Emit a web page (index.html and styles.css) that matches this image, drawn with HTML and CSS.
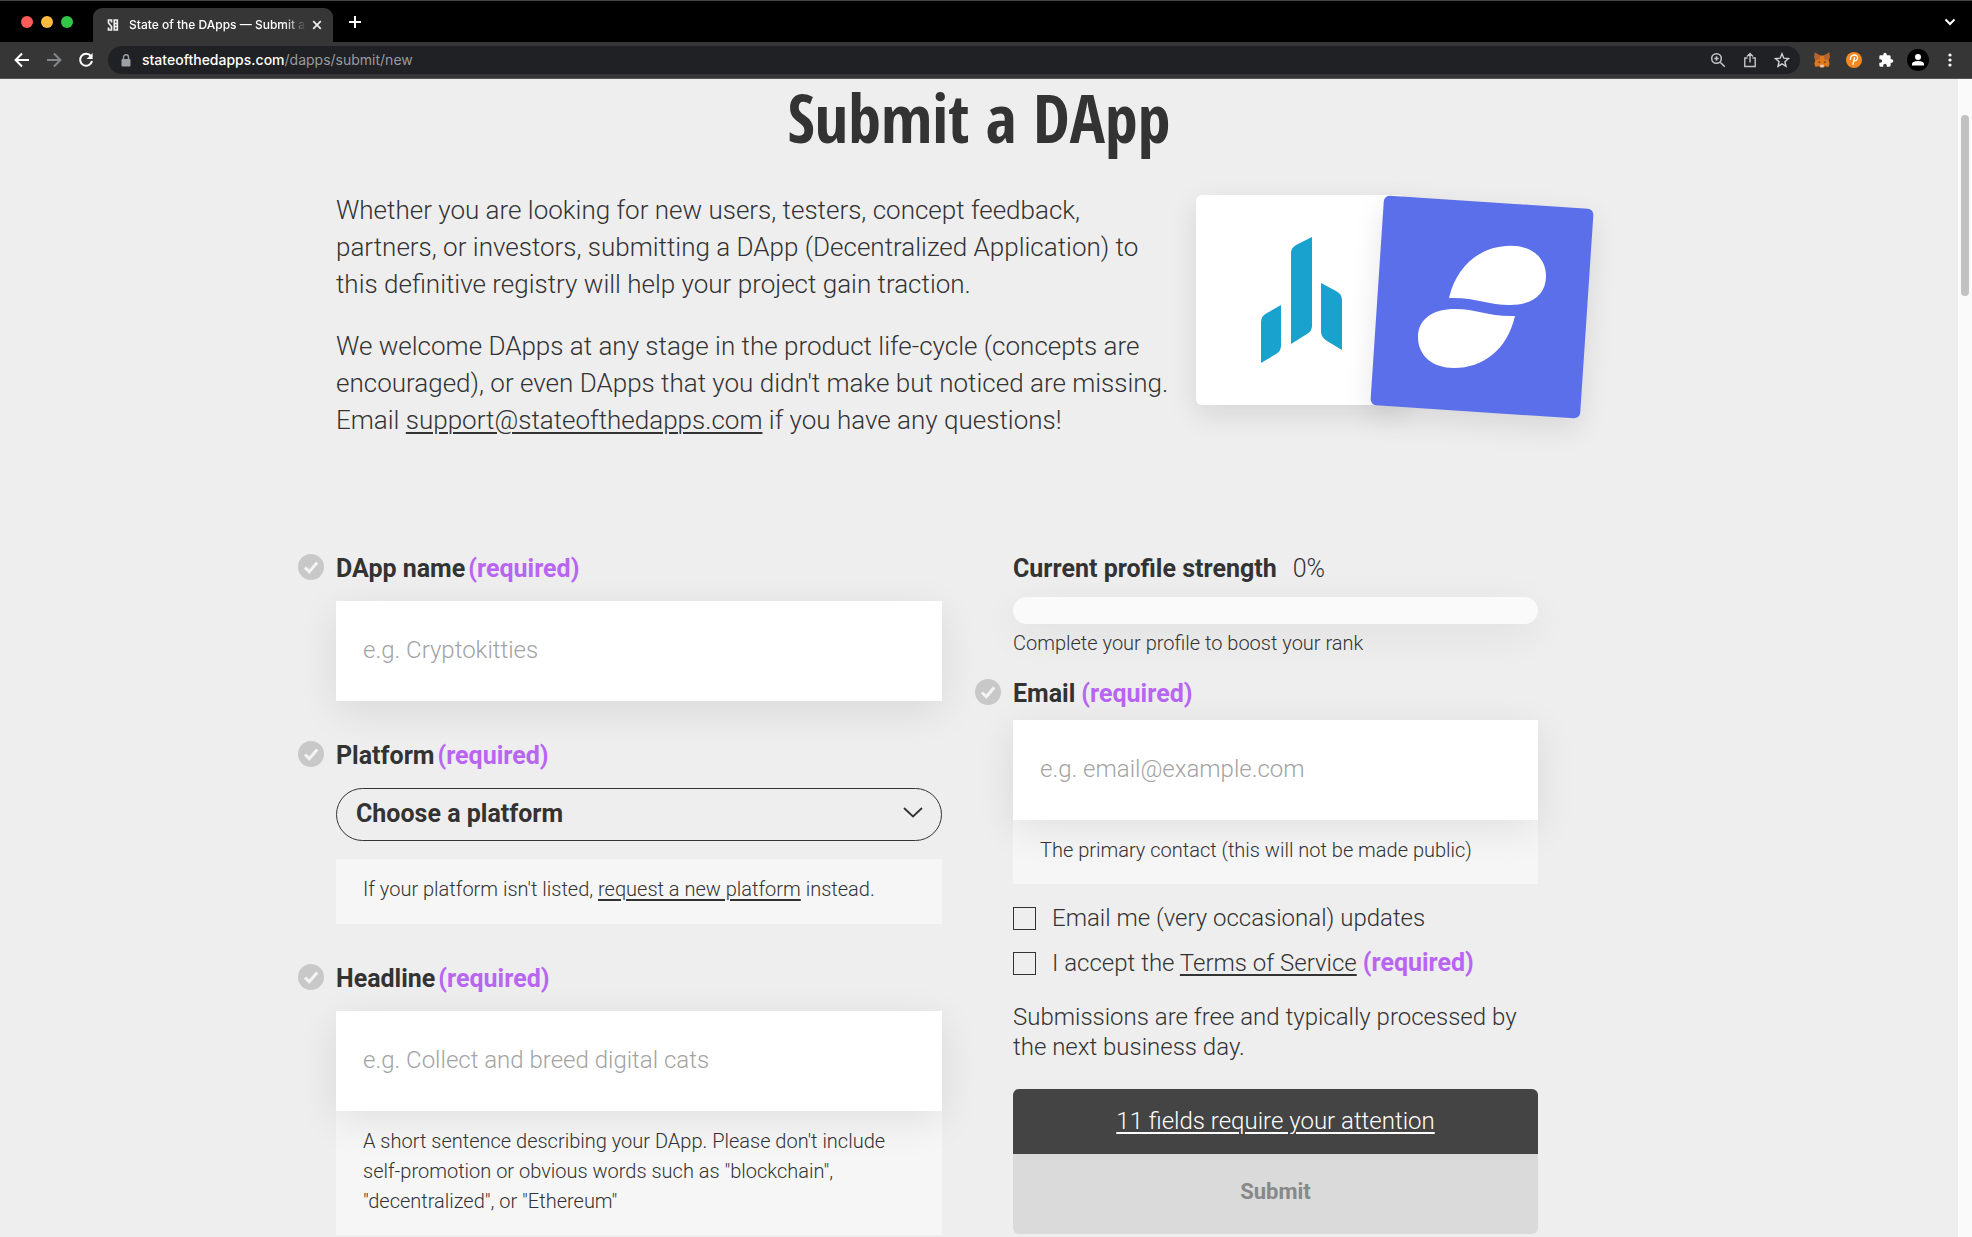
FILE: index.html
```html
<!DOCTYPE html>
<html lang="en">
<head>
<meta charset="utf-8">
<title>State of the DApps — Submit a DApp</title>
<link rel="stylesheet" href="styles.css">
</head>
<body>
<svg class="sprite" aria-hidden="true">
  <symbol id="check" viewBox="0 0 26 26">
    <circle cx="13" cy="13" r="13" fill="#c8c8c8"/>
    <path d="M7 13.5l4.2 4.2 8-9.2" fill="none" stroke="#f4f4f4" stroke-width="3"/>
  </symbol>
</svg>

<header class="browser">
  <div class="tabbar">
    <div class="lights"><i class="light red"></i><i class="light amber"></i><i class="light green"></i></div>
    <div class="tab">
      <svg class="favicon" width="12" height="14" viewBox="0 0 12 14" fill="none" stroke="#eee" stroke-width="1.7"><path d="M4.500 4.500V2H1.500v3l3 3.500V12h-3V9.500M7.300 2v10h3V2zM7.300 5.500h3M7.300 8.500h3"/></svg>
      <span class="tab-title">State of the DApps — Submit a</span>
      <button class="plain" aria-label="Close tab"><svg width="10" height="10" viewBox="0 0 10 10" stroke="#eee" stroke-width="1.7"><path d="M1.2 1.2l7.6 7.6M8.8 1.2L1.2 8.8"/></svg></button>
    </div>
    <button class="plain new-tab" aria-label="New tab"><svg width="14" height="14" viewBox="0 0 14 14" stroke="#fff" stroke-width="2"><path d="M7 1v12M1 7h12"/></svg></button>
    <button class="plain tab-search" aria-label="Search tabs"><svg width="12" height="8" viewBox="0 0 12 8" fill="none" stroke="#fff" stroke-width="2"><path d="M1.5 1.5L6 6l4.500-4.500"/></svg></button>
  </div>
  <div class="toolbar">
    <nav class="nav-buttons">
      <button class="plain" aria-label="Back"><svg width="16" height="16" viewBox="0 0 16 16" fill="none" stroke="#fff" stroke-width="2"><path d="M15 8H2.500M8 1.500L1.600 8 8 14.500"/></svg></button>
      <button class="plain" aria-label="Forward"><svg width="16" height="16" viewBox="0 0 16 16" fill="none" stroke="#858688" stroke-width="2"><path d="M1 8h12.500M8 1.500L14.400 8 8 14.500"/></svg></button>
      <button class="plain" aria-label="Reload"><svg width="16" height="16" viewBox="0 0 16 16" fill="none" stroke="#fff" stroke-width="2"><path d="M13 4.200A6 6 0 1 0 14 9"/><path d="M14.600 1v6H8.600z" fill="#fff" stroke="none"/></svg></button>
    </nav>
    <div class="address">
      <svg width="10" height="13" viewBox="0 0 10 13"><rect x="0.500" y="5" width="9" height="7.500" rx="1" fill="#9aa0a6"/><path d="M2.500 5V3.300a2.500 2.500 0 0 1 5 0V5" fill="none" stroke="#9aa0a6" stroke-width="1.400"/></svg>
      <span class="url"><b>stateofthedapps.com</b>/dapps/submit/new</span>
      <svg width="16" height="16" viewBox="0 0 16 16" fill="none" stroke="#c4c6c9" stroke-width="1.500"><circle cx="6.500" cy="6.500" r="4.800"/><path d="M10.200 10.200l4.600 4.600M4.300 6.500h4.400M6.500 4.300v4.400"/></svg>
      <svg width="16" height="16" viewBox="0 0 16 16" fill="none" stroke="#c4c6c9" stroke-width="1.400"><path d="M5.500 6H2.800v8.500h10.400V6h-2.700M8 10.500V1.800M5 4.500l3-3 3 3"/></svg>
      <svg width="16" height="16" viewBox="0 0 16 16" fill="none" stroke="#d0d2d4" stroke-width="1.400"><path d="M8 1.800l1.800 4.400 4.700.4-3.600 3.100 1.100 4.600L8 11.800l-4 2.500 1.100-4.600L1.500 6.600l4.700-.4z"/></svg>
    </div>
    <div class="extensions">
      <svg width="16" height="16" viewBox="0 0 16 16"><path d="M.8.5L6 3.600h4L15.200.5l.4 5-.9 3.200 1 3-1.200 3.300-3.300-.8L9.500 15.500h-3l-1.700-1.300-3.300.8L.3 11.700l1-3L.4 5.500z" fill="#e2761b"/><path d="M.8.5l5.400 3.800-.7 3-4.200 1L.4 5.500zM15.200.5L9.800 4.300l.7 3 4.200 1 .9-2.800z" fill="#b5622c"/><path d="M6 12.700h4l-.5 2.500h-3z" fill="#d9d2cc"/><path d="M3.600 9.500l2.600.3-.6 1.300zM12.400 9.500l-2.600.3.6 1.300z" fill="#233447"/></svg>
      <svg width="16" height="16" viewBox="0 0 16 16"><circle cx="8" cy="8" r="8" fill="#f7871f"/><path d="M4.400 7.800C4 4.500 6.500 2.800 8.800 3c2.300.2 3.300 2 2.600 3.900-.6 1.700-2.300 2.300-4 2M8.600 5.200L6.800 13" fill="none" stroke="#fff" stroke-width="1.300"/></svg>
      <svg width="16" height="16" viewBox="0 0 24 24"><path fill="#fff" d="M20.500 11H19V7a2 2 0 0 0-2-2h-4V3.500a2.500 2.500 0 0 0-5 0V5H4a2 2 0 0 0-2 2v3.800h1.500a2.700 2.700 0 0 1 0 5.400H2V20a2 2 0 0 0 2 2h3.800v-1.500a2.700 2.700 0 0 1 5.400 0V22H17a2 2 0 0 0 2-2v-4h1.500a2.500 2.500 0 0 0 0-5z"/></svg>
      <svg class="avatar" width="22" height="22" viewBox="0 0 22 22"><circle cx="11" cy="11" r="11" fill="#000"/><circle cx="11" cy="8" r="3" fill="#fff"/><path d="M5 16.500V15c0-2.200 4-3 6-3s6 .8 6 3v1.500z" fill="#fff"/></svg>
      <svg width="16" height="16" viewBox="0 0 16 16" fill="#fff"><circle cx="8" cy="3" r="1.600"/><circle cx="8" cy="8" r="1.600"/><circle cx="8" cy="13" r="1.600"/></svg>
    </div>
  </div>
</header>

<div class="viewport">
<main class="page">
  <h1>Submit a DApp</h1>

  <section class="intro">
    <div class="intro-text">
      <p>Whether you are looking for new users, testers, concept feedback,<br>partners, or investors, submitting a DApp (Decentralized Application) to<br>this definitive registry will help your project gain traction.</p>
      <p>We welcome DApps at any stage in the product life-cycle (concepts are<br>encouraged), or even DApps that you didn't make but noticed are missing.<br>Email <a href="mailto:support@stateofthedapps.com">support@stateofthedapps.com</a> if you have any questions!</p>
    </div>
    <div class="logos">
      <svg class="logo" viewBox="0 0 210 210" fill="#1aa2cf"><path d="M65 168V127Q65 121 71 118L85 110V151Q85 156 80 159zM95 149V58Q95 53 100 50L116 42V131Q116 136 111 139zM125 88L140 96Q146 99 146 105V155L131 146Q125 142 125 137z"/></svg>
      <svg class="logo tilted" viewBox="0 0 210 210" fill="#fff"><g transform="rotate(-3.800 105 105)"><path d="M72 96C80 62 105 43.700 134 43.700c21 0 35 12.300 35 30.300s-13 29-36 29-35-8-61-7z"/><path d="M138 114c-8 34-32 52-61 52-21 0-36-12-36-31 0-18 15-28 37-28s34 8 60 7z"/></g></svg>
    </div>
  </section>

  <form class="form">
    <div class="column main-column">
      <div class="field">
        <svg class="status"><use href="#check"/></svg>
        <label for="name">DApp name <span class="required">(required)</span></label>
        <input class="text-input" id="name" type="text" placeholder="e.g. Cryptokitties">
      </div>
      <div class="field">
        <svg class="status"><use href="#check"/></svg>
        <label for="platform">Platform <span class="required">(required)</span></label>
        <div class="select">
          <select id="platform"><option>Choose a platform</option></select>
          <svg width="20" height="11" viewBox="0 0 20 11" fill="none" stroke="#333" stroke-width="1.800"><path d="M1 1l9 8.500L19 1"/></svg>
        </div>
        <p class="hint detached">If your platform isn't listed, <a href="#">request a new platform</a> instead.</p>
      </div>
      <div class="field">
        <svg class="status"><use href="#check"/></svg>
        <label for="headline">Headline <span class="required">(required)</span></label>
        <input class="text-input" id="headline" type="text" placeholder="e.g. Collect and breed digital cats">
        <p class="hint">A short sentence describing your DApp. Please don't include<br>self-promotion or obvious words such as "blockchain",<br>"decentralized", or "Ethereum"</p>
      </div>
    </div>

    <div class="column side-column">
      <div class="strength">
        <div class="strength-title"><strong>Current profile strength</strong><span>0%</span></div>
        <div class="bar" role="progressbar" aria-label="Profile strength" aria-valuenow="0"></div>
        <p>Complete your profile to boost your rank</p>
      </div>
      <div class="field compact">
        <svg class="status"><use href="#check"/></svg>
        <label for="email">Email <span class="required">(required)</span></label>
        <input class="text-input" id="email" type="email" placeholder="e.g. email@example.com">
        <p class="hint">The primary contact (this will not be made public)</p>
      </div>
      <div class="checks">
        <div class="check"><input type="checkbox" id="updates"><label for="updates">Email me (very occasional) updates</label></div>
        <div class="check"><input type="checkbox" id="terms"><label for="terms">I accept the <a href="#">Terms of Service</a></label><span class="required">(required)</span></div>
      </div>
      <p class="note">Submissions are free and typically processed by<br>the next business day.</p>
      <div class="actions">
        <div class="attention"><a href="#name">11 fields require your attention</a></div>
        <button class="submit" type="submit" disabled>Submit</button>
      </div>
    </div>
  </form>
</main>
<div class="scrollbar"><div class="thumb"></div></div>
</div>
</body>
</html>
```
FILE: styles.css
```css
* { box-sizing: border-box; }

body {
  margin: 0;
  min-height: 100vh;
  display: flex;
  flex-direction: column;
  background: #eee;
  color: #333;
  font-family: Roboto, "Liberation Sans", sans-serif;
  font-weight: 300;
  font-size: 24px;
  line-height: 30px;
}

p { margin: 0; }
a { color: inherit; text-decoration-thickness: 2px; text-underline-offset: 3px; }
svg { display: block; flex: none; }
.sprite { display: none; }
.plain { display: flex; padding: 0; border: 0; background: none; }

/* Browser frame */
.browser { font-family: Inter, sans-serif; line-height: 20px; }
.tabbar {
  display: flex;
  align-items: center;
  height: 42px;
  padding-right: 16px;
  border-top: 1px solid #444;
  background: #000;
}
.lights { display: flex; gap: 8px; padding: 0 20px 0 21px; }
.light { width: 12px; height: 12px; border-radius: 50%; }
.red { background: #fc5b57; }
.amber { background: #fdbc40; }
.green { background: #33c748; }
.tab {
  display: flex;
  align-items: center;
  align-self: flex-end;
  width: 240px;
  height: 34px;
  padding: 0 11px 0 14px;
  border-radius: 9px 9px 0 0;
  background: #363636;
}
.tab-title {
  flex: 1;
  margin: 0 6px 0 10px;
  overflow: hidden;
  white-space: nowrap;
  font-size: 12px;
  font-weight: 500;
  color: #fff;
  mask-image: linear-gradient(90deg, #000 88%, transparent);
}
.new-tab { margin-left: 15px; }
.tab-search { margin-left: auto; }
.toolbar {
  display: flex;
  align-items: center;
  height: 37px;
  padding: 0 14px;
  background: #363636;
  border-bottom: 1px solid #555;
}
.nav-buttons { display: flex; gap: 16px; }
.address {
  flex: 1;
  display: flex;
  align-items: center;
  gap: 16px;
  height: 28px;
  margin: 0 14px;
  padding: 0 10px 0 13px;
  border-radius: 14px;
  background: #202124;
}
.url { flex: 1; margin-left: -5px; font-size: 14px; font-weight: 400; color: #9a9b9e; }
.url b { font-weight: 500; color: #fff; }
.extensions { display: flex; align-items: center; gap: 16px; }
.avatar { margin: 0 -3px; }

/* Page area and its scrollbar */
.viewport { flex: 1; display: flex; }
.page { flex: 1; padding: 0 24px; }
.scrollbar { width: 14px; padding: 36px 3px 0; background: #fafafa; }
.thumb { height: 181px; border-radius: 4px; background: #c1c1c1; }

h1 {
  margin: 0 0 4px;
  text-align: center;
  font-family: "Open Sans Condensed", "Noto Sans Condensed", "Roboto Condensed", Roboto, sans-serif;
  font-size: 66px;
  font-weight: 500;
  line-height: 76px;
}

.intro, .form { max-width: 1286px; margin: 0 auto; }
.intro {
  display: flex;
  gap: 20px;
  padding-top: 33px;
}
.intro-text { width: 840px; font-size: 26px; line-height: 37px; }
.intro-text p + p { margin-top: 25px; }
.logos { display: flex; align-items: flex-start; padding-top: 3px; }
.logo {
  width: 210px;
  height: 210px;
  border-radius: 6px;
  background: #fff;
  box-shadow: 0 10px 30px rgba(0, 0, 0, .1);
}
.tilted { margin: 7px 0 0 -29px; background: #5c6fea; transform: rotate(3.8deg); }

/* Form */
.form {
  display: flex;
  gap: 71px;
  padding-top: 114px;
  padding-right: 84px;
  padding-bottom: 3px;
}
.main-column { flex: 606; }
.side-column { flex: 525; }
.field { position: relative; display: flex; flex-direction: column; }
.field + .field { margin-top: 39px; }
.field label {
  display: flex;
  gap: 3px;
  margin-bottom: 16px;
  font-size: 25px;
  font-weight: 700;
  line-height: 32px;
}
.status { position: absolute; left: -38px; top: 1px; width: 26px; height: 26px; }
.required { color: #b866f2; font-size: 25px; font-weight: 700; }

.text-input {
  position: relative;
  width: 100%;
  height: 100px;
  padding: 0 27px 2px;
  border: 0;
  background: #fff;
  font: inherit;
  color: inherit;
  box-shadow: 0 10px 40px rgba(0, 0, 0, .09);
}
.text-input::placeholder { color: #a3a3a3; opacity: 1; }
.hint {
  padding: 15px 27px 19px;
  background: #f6f6f6;
  font-size: 20px;
  line-height: 30px;
}
.hint.detached { margin-top: 18px; padding-bottom: 20px; }

.select { display: grid; align-items: center; }
.select > * { grid-area: 1 / 1; }
.select select {
  appearance: none;
  height: 53px;
  padding: 0 19px 2px;
  border: 1px solid #333;
  border-radius: 27px;
  background: none;
  font: inherit;
  font-size: 25px;
  font-weight: 700;
  color: inherit;
}
.select svg { justify-self: end; margin: 0 19px 4px; pointer-events: none; }

.strength { display: flex; flex-direction: column; }
.strength-title { display: flex; gap: 16px; font-size: 25px; line-height: 32px; }
.strength-title strong { font-weight: 700; }
.bar {
  height: 27px;
  margin: 12px 0 4px;
  border-radius: 14px;
  background: #fafafa;
  box-shadow: 0 10px 40px rgba(0, 0, 0, .07);
}
.strength p { font-size: 20px; }
.compact { margin-top: 20px; }
.field.compact label { gap: 6px; margin-bottom: 10px; }

.checks { display: flex; flex-direction: column; gap: 15px; margin-top: 19px; }
.check { display: flex; align-items: center; }
.check input {
  appearance: none;
  width: 23px;
  height: 23px;
  margin: 0 16px 0 0;
  border: 1px solid #333;
}
.check .required { margin-left: 6px; }
.note { margin-top: 24px; }
.actions {
  display: flex;
  flex-direction: column;
  margin-top: 27px;
  border-radius: 6px;
  overflow: hidden;
}
.attention { padding: 17px 0 18px; background: #444; color: #fff; text-align: center; }
.submit {
  height: 80px;
  padding: 0 0 5px;
  border: 0;
  background: #dadada;
  color: #888;
  font: inherit;
  font-size: 22px;
  font-weight: 700;
}
```
